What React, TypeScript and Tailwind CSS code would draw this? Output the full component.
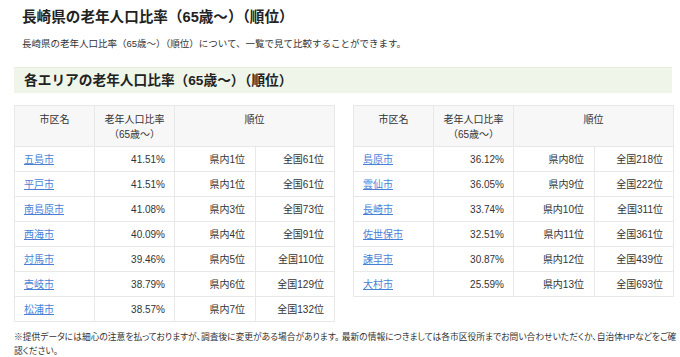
import React from "react";

const left = [
  ["五島市", "41.51%", "県内1位", "全国61位"],
  ["平戸市", "41.51%", "県内1位", "全国61位"],
  ["南島原市", "41.08%", "県内3位", "全国73位"],
  ["西海市", "40.09%", "県内4位", "全国91位"],
  ["対馬市", "39.46%", "県内5位", "全国110位"],
  ["壱岐市", "38.79%", "県内6位", "全国129位"],
  ["松浦市", "38.57%", "県内7位", "全国132位"],
];
const right = [
  ["島原市", "36.12%", "県内8位", "全国218位"],
  ["雲仙市", "36.05%", "県内9位", "全国222位"],
  ["長崎市", "33.74%", "県内10位", "全国311位"],
  ["佐世保市", "32.51%", "県内11位", "全国361位"],
  ["諫早市", "30.87%", "県内12位", "全国439位"],
  ["大村市", "25.59%", "県内13位", "全国693位"],
];

function Table({ rows }: { rows: string[][] }) {
  return (
    <table className="w-[320px] border-collapse table-fixed text-[10px] text-[#333]">
      <colgroup>
        <col className="w-[80px]" />
        <col className="w-[80px]" />
        <col className="w-[81px]" />
        <col className="w-[79px]" />
      </colgroup>
      <thead>
        <tr className="bg-[#f7f7f7]">
          <th className="h-[41px] border border-[#e8e8e8] align-top pt-[6px] font-normal leading-[15px] text-center">市区名</th>
          <th className="h-[41px] border border-[#e8e8e8] align-top pt-[6px] font-normal leading-[15px] text-center">
            老年人口比率
            <br />
            （65歳〜）
          </th>
          <th colSpan={2} className="h-[41px] border border-[#e8e8e8] align-top pt-[6px] font-normal leading-[15px] text-center">順位</th>
        </tr>
      </thead>
      <tbody>
        {rows.map((r) => (
          <tr key={r[0]}>
            <td className="h-[25px] border border-[#e8e8e8] px-[9px] py-0 text-left">
              <a href="#" className="text-[#4a7fd6] underline">{r[0]}</a>
            </td>
            <td className="h-[25px] border border-[#e8e8e8] px-[9px] py-0 text-right">{r[1]}</td>
            <td className="h-[25px] border border-[#e8e8e8] px-[10px] py-0 text-right">{r[2]}</td>
            <td className="h-[25px] border border-[#e8e8e8] px-[10px] py-0 text-right">{r[3]}</td>
          </tr>
        ))}
      </tbody>
    </table>
  );
}

export default function App() {
  return (
    <div
      className="w-[680px] h-[357px] overflow-hidden bg-white px-[14px] text-[#333]"
      style={{ fontFamily: '"Liberation Sans", "Noto Sans CJK JP", sans-serif' }}
    >
      <h1 className="pl-[8px] pt-[7px] text-[14.6px] font-bold leading-[20px] text-[#222]">
        長崎県の老年人口比率（65歳〜）（順位）
      </h1>
      <p className="pl-[8px] mt-[11px] text-[9.5px] leading-[12px] text-[#333]">
        長崎県の老年人口比率（65歳〜）（順位）について、一覧で見て比較することができます。
      </p>
      <div className="mt-[17px] h-[26px] w-[658px] bg-[#eff6e9] border-t border-[#e6eee0] pl-[10px] flex items-center">
        <h2 className="text-[13.7px] font-bold text-[#222] leading-none">各エリアの老年人口比率（65歳〜）（順位）</h2>
      </div>
      <div className="mt-[12px] flex items-start gap-[18px]">
        <Table rows={left} />
        <Table rows={right} />
      </div>
      <p className="mt-[8px] w-[664px] break-all text-[8.75px] leading-[14px] text-[#333] [font-feature-settings:'palt']">
        ※提供データには細心の注意を払っておりますが、調査後に変更がある場合があります。 最新の情報につきましては各市区役所までお問い合わせいただくか、自治体HPなどをご確認ください。
      </p>
    </div>
  );
}
